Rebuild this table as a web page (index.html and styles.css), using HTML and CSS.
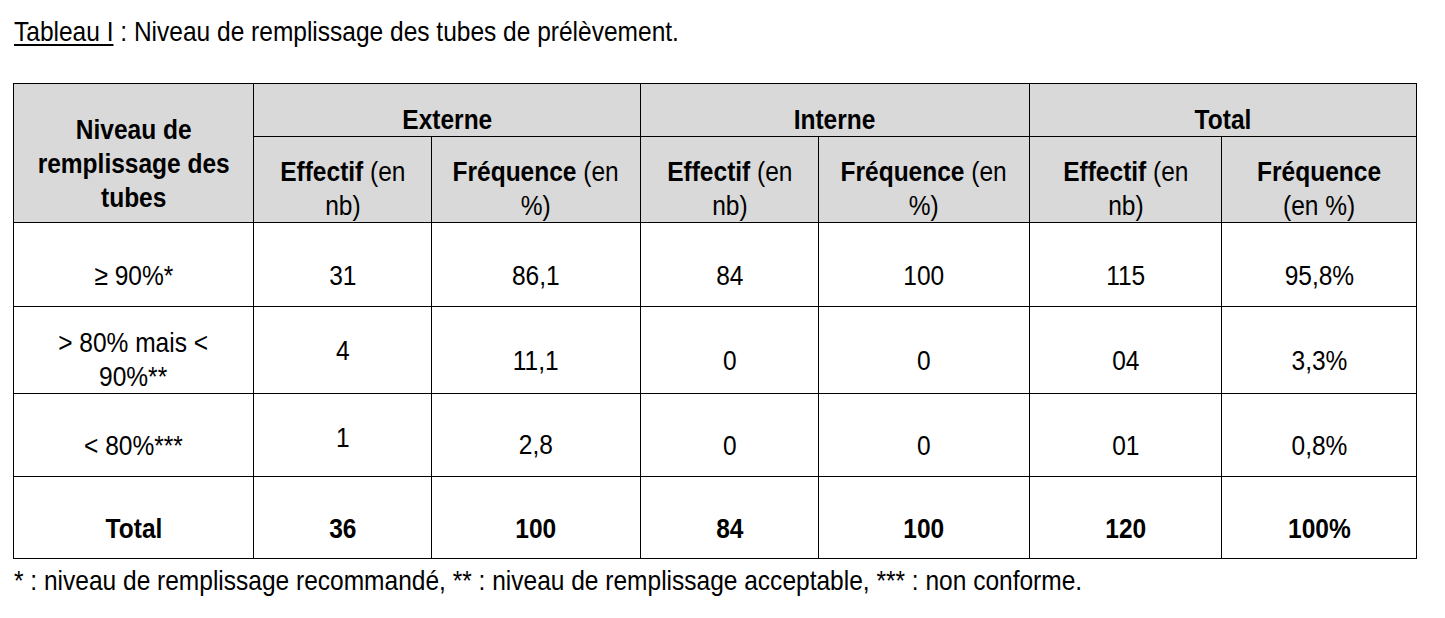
FILE: index.html
```html
<!DOCTYPE html>
<html lang="fr">
<head>
<meta charset="utf-8">
<title>Tableau I</title>
<link rel="stylesheet" href="styles.css">
</head>
<body>
<p class="caption"><span class="tl"><span class="u">Tableau I</span> : Niveau de remplissage des tubes de prélèvement.</span></p>
<table class="tbl">
  <colgroup>
    <col class="c0"><col class="c1"><col class="c2"><col class="c3"><col class="c4"><col class="c5"><col class="c6">
  </colgroup>
  <thead>
    <tr class="h1">
      <th rowspan="2" class="b lbl"><span class="t">Niveau de<br>remplissage des<br>tubes</span></th>
      <th colspan="2" class="b"><span class="t">Externe</span></th>
      <th colspan="2" class="b"><span class="t">Interne</span></th>
      <th colspan="2" class="b"><span class="t">Total</span></th>
    </tr>
    <tr class="h2">
      <th><span class="t"><b>Effectif</b> (en<br>nb)</span></th>
      <th><span class="t"><b>Fréquence</b> (en<br>%)</span></th>
      <th><span class="t"><b>Effectif</b> (en<br>nb)</span></th>
      <th><span class="t"><b>Fréquence</b> (en<br>%)</span></th>
      <th><span class="t"><b>Effectif</b> (en<br>nb)</span></th>
      <th><span class="t"><b>Fréquence</b><br>(en %)</span></th>
    </tr>
  </thead>
  <tbody>
    <tr class="r1">
      <td><span class="t">≥ 90%*</span></td>
      <td><span class="t">31</span></td>
      <td><span class="t">86,1</span></td>
      <td><span class="t">84</span></td>
      <td><span class="t">100</span></td>
      <td><span class="t">115</span></td>
      <td><span class="t">95,8%</span></td>
    </tr>
    <tr class="r2">
      <td class="two"><span class="t">&gt; 80% mais &lt;<br>90%**</span></td>
      <td class="hi"><span class="t">4</span></td>
      <td><span class="t">11,1</span></td>
      <td><span class="t">0</span></td>
      <td><span class="t">0</span></td>
      <td><span class="t">04</span></td>
      <td><span class="t">3,3%</span></td>
    </tr>
    <tr class="r3">
      <td><span class="t">&lt; 80%***</span></td>
      <td class="hi2"><span class="t">1</span></td>
      <td class="mid"><span class="t">2,8</span></td>
      <td><span class="t">0</span></td>
      <td><span class="t">0</span></td>
      <td><span class="t">01</span></td>
      <td><span class="t">0,8%</span></td>
    </tr>
    <tr class="r4">
      <td class="b"><span class="t">Total</span></td>
      <td class="b"><span class="t">36</span></td>
      <td class="b"><span class="t">100</span></td>
      <td class="b"><span class="t">84</span></td>
      <td class="b"><span class="t">100</span></td>
      <td class="b"><span class="t">120</span></td>
      <td class="b"><span class="t">100%</span></td>
    </tr>
  </tbody>
</table>
<p class="note"><span class="tl">* : niveau de remplissage recommandé, ** : niveau de remplissage acceptable, *** : non conforme.</span></p>
</body>
</html>
```
FILE: styles.css
```css
html, body {
  margin: 0;
  padding: 0;
  background: #ffffff;
}
body {
  padding: 14px 0 0 13px;
  font-family: "Liberation Sans", Arial, sans-serif;
  color: #000;
  font-size: 28.5px;
}
.t, .tl {
  display: inline-block;
  white-space: nowrap;
  transform: scaleX(0.86);
}
.t {
  transform-origin: 50% 50%;
}
.tl {
  transform-origin: 0 50%;
}
.caption {
  margin: 0 0 0 1px;
  line-height: 34px;
  height: 34px;
}
.u {
  text-decoration: underline;
  text-underline-offset: 3px;
  text-decoration-thickness: 1.5px;
}
.tbl {
  margin-top: 35px;
  border-collapse: collapse;
  table-layout: fixed;
  width: 1403px;
}
.c0 { width: 240px; }
.c1 { width: 178px; }
.c2 { width: 209px; }
.c3 { width: 178px; }
.c4 { width: 211px; }
.c5 { width: 192px; }
.c6 { width: 195px; }
.tbl th, .tbl td {
  border: 1px solid #000;
  text-align: center;
  vertical-align: middle;
  line-height: 34px;
  padding: 20px 0 0 0;
  font-weight: normal;
}
.tbl th {
  background: #d9d9d9;
}
.tbl .b, .tbl b {
  font-weight: bold;
}
.h1 { height: 53px; }
.h2 { height: 86px; }
.r1 { height: 84px; }
.r2 { height: 87px; }
.r3 { height: 83px; }
.r4 { height: 82px; }
.h1 th { padding-top: 18px; }
.h1 th.lbl { padding-top: 20px; }
.h2 th { padding-top: 17px; }
.tbl td.two { padding-top: 18px; }
.tbl td.hi { padding: 10px 0 10px 0; }
.tbl td.hi2 { padding: 12px 0 8px 0; }
.tbl td.mid { padding-top: 18px; }
.note {
  margin: 4px 0 0 1px;
  line-height: 34px;
}
```
